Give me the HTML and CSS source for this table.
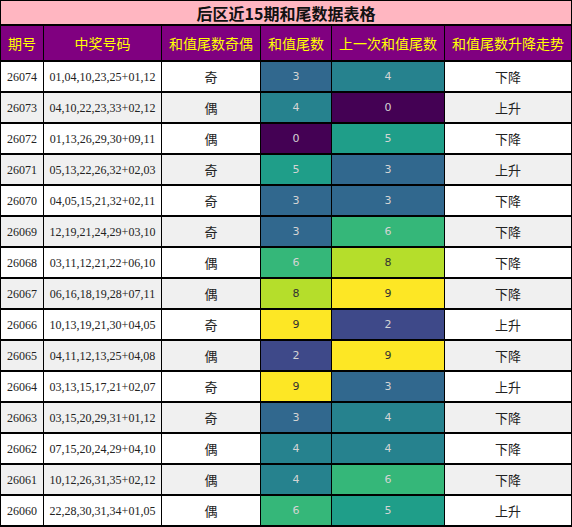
FILE: index.html
```html
<!DOCTYPE html>
<html lang="zh">
<head>
<meta charset="utf-8">
<title>后区近15期和尾数据表格</title>
<link rel="stylesheet" href="styles.css">
</head>
<body>
<div class="sheet">
  <div class="title">后区近15期和尾数据表格</div>
  <div class="h">期号</div><div class="h">中奖号码</div><div class="h">和值尾数奇偶</div><div class="h">和值尾数</div><div class="h">上一次和值尾数</div><div class="h">和值尾数升降走势</div>

  <div class="c num">26074</div><div class="c num">01,04,10,23,25+01,12</div><div class="c zh">奇</div><div class="c v v3">3</div><div class="c v v4">4</div><div class="c zh">下降</div>
  <div class="c num alt">26073</div><div class="c num alt">04,10,22,23,33+02,12</div><div class="c zh alt">偶</div><div class="c v v4">4</div><div class="c v v0">0</div><div class="c zh alt">上升</div>
  <div class="c num">26072</div><div class="c num">01,13,26,29,30+09,11</div><div class="c zh">偶</div><div class="c v v0">0</div><div class="c v v5">5</div><div class="c zh">下降</div>
  <div class="c num alt">26071</div><div class="c num alt">05,13,22,26,32+02,03</div><div class="c zh alt">奇</div><div class="c v v5">5</div><div class="c v v3">3</div><div class="c zh alt">上升</div>
  <div class="c num">26070</div><div class="c num">04,05,15,21,32+02,11</div><div class="c zh">奇</div><div class="c v v3">3</div><div class="c v v3">3</div><div class="c zh">下降</div>
  <div class="c num alt">26069</div><div class="c num alt">12,19,21,24,29+03,10</div><div class="c zh alt">奇</div><div class="c v v3">3</div><div class="c v v6">6</div><div class="c zh alt">下降</div>
  <div class="c num">26068</div><div class="c num">03,11,12,21,22+06,10</div><div class="c zh">偶</div><div class="c v v6">6</div><div class="c v v8">8</div><div class="c zh">下降</div>
  <div class="c num alt">26067</div><div class="c num alt">06,16,18,19,28+07,11</div><div class="c zh alt">偶</div><div class="c v v8">8</div><div class="c v v9">9</div><div class="c zh alt">下降</div>
  <div class="c num">26066</div><div class="c num">10,13,19,21,30+04,05</div><div class="c zh">奇</div><div class="c v v9">9</div><div class="c v v2">2</div><div class="c zh">上升</div>
  <div class="c num alt">26065</div><div class="c num alt">04,11,12,13,25+04,08</div><div class="c zh alt">偶</div><div class="c v v2">2</div><div class="c v v9">9</div><div class="c zh alt">下降</div>
  <div class="c num">26064</div><div class="c num">03,13,15,17,21+02,07</div><div class="c zh">奇</div><div class="c v v9">9</div><div class="c v v3">3</div><div class="c zh">上升</div>
  <div class="c num alt">26063</div><div class="c num alt">03,15,20,29,31+01,12</div><div class="c zh alt">奇</div><div class="c v v3">3</div><div class="c v v4">4</div><div class="c zh alt">下降</div>
  <div class="c num">26062</div><div class="c num">07,15,20,24,29+04,10</div><div class="c zh">偶</div><div class="c v v4">4</div><div class="c v v4">4</div><div class="c zh">下降</div>
  <div class="c num alt">26061</div><div class="c num alt">10,12,26,31,35+02,12</div><div class="c zh alt">偶</div><div class="c v v4">4</div><div class="c v v6">6</div><div class="c zh alt">下降</div>
  <div class="c num">26060</div><div class="c num">22,28,30,31,34+01,05</div><div class="c zh">偶</div><div class="c v v6">6</div><div class="c v v5">5</div><div class="c zh">上升</div>
</div>
</body>
</html>
```

FILE: styles.css
```css
html, body {
  margin: 0;
  padding: 0;
  background: #ffffff;
}

.sheet {
  width: 572px;
  box-sizing: border-box;
  display: grid;
  grid-template-columns: 42px 117px 98px 70px 112px 126px;
  grid-template-rows: 23px 34px repeat(15, 29px);
  column-gap: 1px;
  row-gap: 2px;
  padding: 1px 1px 2px 1px;
  background: #000;
  font-family: "Noto Sans CJK SC", "Noto Sans", sans-serif;
}

.title {
  grid-column: 1 / -1;
  background: #ffb6c1;
  color: #111;
  font-weight: bold;
  font-size: 16px;
  display: flex;
  align-items: center;
  justify-content: center;
  line-height: 1;
}

.h {
  background: #800080;
  color: #ffff00;
  font-size: 14px;
  display: flex;
  align-items: center;
  justify-content: center;
  white-space: nowrap;
  line-height: 1;
}

.c {
  background: #ffffff;
  display: flex;
  align-items: center;
  justify-content: center;
  white-space: nowrap;
  color: #222;
  line-height: 1;
}

.c.alt {
  background: #f0f0f0;
}

.num {
  font-family: "Liberation Serif", "Times New Roman", serif;
  font-size: 12px;
}

.zh {
  font-size: 13px;
  color: #222;
}

.v {
  font-family: "DejaVu Sans", sans-serif;
  font-size: 11px;
  color: #d4d4d4;
}

.v0 { background: #440154; }
.v2 { background: #3e4989; }
.v3 { background: #31688e; }
.v4 { background: #26828e; }
.v5 { background: #1f9e89; }
.v6 { background: #35b779; }
.v8 { background: #b5de2b; color: #333; }
.v9 { background: #fde725; color: #333; }
```
